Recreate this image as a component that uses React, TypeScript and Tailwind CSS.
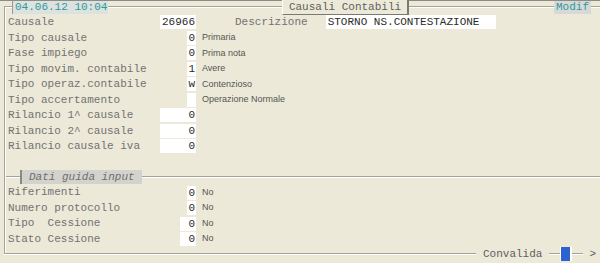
import React from 'react';

type RowProps = {
    label: string;
    value?: string;
    boxW?: number;
    side?: string;
    children?: React.ReactNode;
};

const boxWidth: Record<number, string> = {
    9: 'w-[9px]',
    16: 'w-[16px]',
    36: 'w-[36px]',
};

function Row({ label, value, boxW = 9, side, children }: RowProps) {
    return (
        <div className="flex items-center h-[15.5px]">
            <span className="w-[152px] shrink-0 whitespace-pre text-[#727272]">{label}</span>
            <div className="w-[36px] shrink-0 flex justify-end">
                <div className={`${boxWidth[boxW]} h-[14px] bg-white text-right leading-[14px] text-[#2a2a2a] pr-px`}>
                    {value}
                </div>
            </div>
            {side && (
                <span className="ml-[6px] text-[9px] text-[#555555] font-['Liberation_Sans',Arial,sans-serif]">
                    {side}
                </span>
            )}
            {children}
        </div>
    );
}

export default function App() {
    return (
        <div className="relative w-[600px] h-[263px] overflow-hidden bg-[#ECE9D8] font-['Liberation_Mono','Courier_New',monospace] text-[11px]">
            {/* riga superiore */}
            <div className="h-px bg-[#8c8c84]" />

            {/* cornice */}
            <div className="ml-[4px] mt-[5px] w-[620px] h-[248px] border-l border-t border-b border-[#a3a398] shadow-[0_1px_0_#ffffff]">
                <div className="h-full border-l border-t border-white pl-[2px] pt-[6.5px]">
                    <Row label="Causale" value="26966" boxW={36}>
                        <span className="ml-[39px] text-[#727272]">Descrizione</span>
                        <div className="ml-[18px] w-[170px] h-[14px] bg-white leading-[14px] pl-[2px] text-[#2a2a2a]">
                            STORNO NS.CONTESTAZIONE
                        </div>
                    </Row>
                    <Row label="Tipo causale" value="0" side="Primaria" />
                    <Row label="Fase impiego" value="0" side="Prima nota" />
                    <Row label="Tipo movim. contabile" value="1" side="Avere" />
                    <Row label="Tipo operaz.contabile" value="w" side="Contenzioso" />
                    <Row label="Tipo accertamento" value="" side="Operazione Normale" />
                    <Row label="Rilancio 1^ causale" value="0" boxW={36} />
                    <Row label="Rilancio 2^ causale" value="0" boxW={36} />
                    <Row label="Rilancio causale iva" value="0" boxW={36} />

                    {/* separatore Dati guida input */}
                    <div className="mt-[16px] -ml-[2px] flex items-center h-[14px]">
                        <div className="w-[14px] h-[2px] border-t border-[#a3a398] border-b border-b-white" />
                        <div className="w-[122px] h-[14px] bg-[#D4D2CC] border-l-2 border-[#8a8a84] pl-[7px] leading-[14px] italic text-[#6e6e6e]">
                            Dati guida input
                        </div>
                        <div className="flex-1 h-[2px] border-t border-[#a3a398] border-b border-b-white" />
                    </div>

                    <div className="mt-[0.75px]">
                        <Row label="Riferimenti" value="0" side="No" />
                        <Row label="Numero protocollo" value="0" side="No" />
                        <Row label="Tipo  Cessione" value="0" boxW={16} side="No" />
                        <Row label="Stato Cessione" value="0" boxW={16} side="No" />
                    </div>
                </div>
            </div>

            {/* data */}
            <div className="absolute left-[12px] top-[1px] w-[96px] h-[13px] bg-[#DCE2E0] border-l border-[#9a9a94] pl-[2px] leading-[13px] text-[#2E9A9A]">
                04.06.12 10:04
            </div>

            {/* titolo */}
            <div className="absolute left-[282px] top-0 w-[127px] h-[15px] bg-[#ECE9D8] border-l border-white border-r-2 border-r-[#7a7a74] border-b border-b-[#7a7a74] text-center leading-[14px] text-[#606060]">
                Causali Contabili
            </div>

            {/* modalita */}
            <div className="absolute left-[554px] top-[1px] w-[37px] h-[13px] bg-[#D6D9D8] text-center leading-[13px] text-[#2E9A9A]">
                Modif
            </div>

            {/* convalida */}
            <div className="absolute left-[476px] top-[247px] h-[14px] flex items-center">
                <span className="bg-[#ECE9D8] px-[7px] leading-[13px] text-[#606060]">Convalida</span>
                <div className="w-[11px]" />
                <div className="w-[12px] h-[14px] bg-[#2E62D0] border-l border-r-2 border-white" />
                <div className="w-[11px]" />
                <span className="bg-[#ECE9D8] px-[6px] leading-[13px] text-[#606060]">&gt;</span>
            </div>
        </div>
    );
}
